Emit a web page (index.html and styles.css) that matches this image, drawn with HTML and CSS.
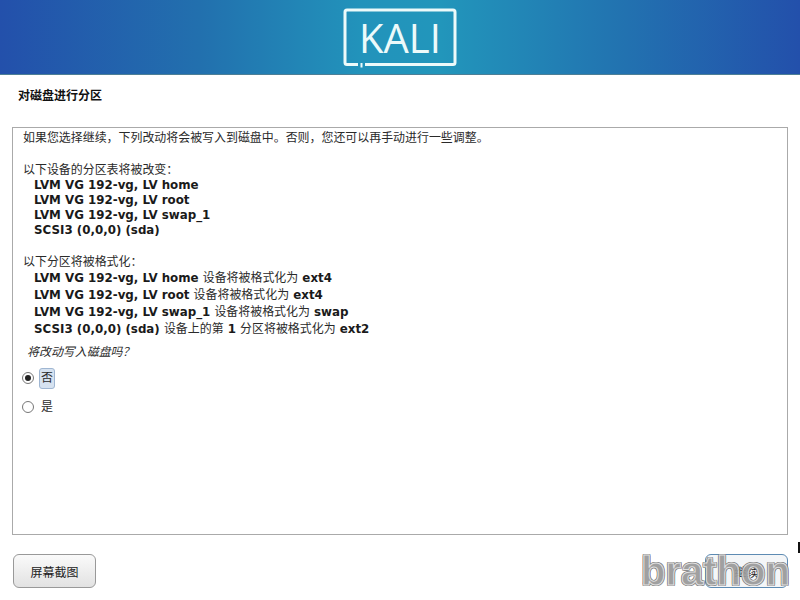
FILE: index.html
```html
<!DOCTYPE html>
<html lang="zh">
<head>
  <meta charset="utf-8">
  <title>对磁盘进行分区</title>
  <link rel="stylesheet" href="styles.css">
</head>
<body>
  <div class="banner">
    <svg class="logo" width="114" height="60" viewBox="0 0 114 60">
      <path d="M22 56.500H110a2 2 0 0 0 2-2V4a2 2 0 0 0-2-2H4a2 2 0 0 0-2 2V54.500a2 2 0 0 0 2 2H15" fill="none" stroke="#ecfafa" stroke-width="3"/>
      <path d="M18.500 55v4.500" stroke="#ecfafa" stroke-width="2"/>
    </svg>
    <span class="logo-text">KALI</span>
  </div>

  <h1 class="title">对磁盘进行分区</h1>

  <div class="panel">
    <p class="line">如果您选择继续，下列改动将会被写入到磁盘中。否则，您还可以再手动进行一些调整。</p>
    <p class="line gap-top">以下设备的分区表将被改变：</p>
    <p class="item">LVM VG 192-vg, LV home</p>
    <p class="item">LVM VG 192-vg, LV root</p>
    <p class="item">LVM VG 192-vg, LV swap_1</p>
    <p class="item">SCSI3 (0,0,0) (sda)</p>
    <p class="line gap-top">以下分区将被格式化：</p>
    <p class="item tall">LVM VG 192-vg, LV home <span class="cn">设备将被格式化为</span> ext4</p>
    <p class="item tall">LVM VG 192-vg, LV root <span class="cn">设备将被格式化为</span> ext4</p>
    <p class="item tall">LVM VG 192-vg, LV swap_1 <span class="cn">设备将被格式化为</span> swap</p>
    <p class="item tall">SCSI3 (0,0,0) (sda) <span class="cn">设备上的第</span> 1 <span class="cn">分区将被格式化为</span> ext2</p>
    <p class="question">将改动写入磁盘吗？</p>
    <div class="option">
      <span class="radio checked"></span>
      <span class="option-label selected">否</span>
    </div>
    <div class="option">
      <span class="radio"></span>
      <span class="option-label">是</span>
    </div>
  </div>

  <div class="buttons">
    <button class="btn">屏幕截图</button>
    <button class="btn btn-main">继续</button>
  </div>

  <div class="cursor-mark"></div>
  <div class="watermark">brathon</div>
</body>
</html>
```

FILE: styles.css
```css
* {
  box-sizing: border-box;
}

html, body {
  height: 100%;
}

body {
  margin: 0;
  width: 800px;
  height: 600px;
  overflow: hidden;
  position: relative;
  background-color: #fff;
  font-family: "DejaVu Sans", "Noto Sans CJK TC", sans-serif;
  font-size: 11.950px;
  color: #2a2a2a;
}

.banner {
  height: 75px;
  position: relative;
  background: linear-gradient(90deg, #2350ab 0%, #2270ae 25%, #2293bb 45%, #2296bb 55%, #2272b0 78%, #2350ab 100%);
  border-bottom: 1px solid #4d7f96;
}

.logo {
  position: absolute;
  left: 343px;
  top: 8px;
}

.logo-text {
  position: absolute;
  left: 359px;
  top: 10px;
  font-family: "Open Sans", "Liberation Sans", sans-serif;
  font-size: 40px;
  font-weight: 500;
  line-height: 56px;
  color: #ecfafa;
}

.title {
  margin: 0;
  padding: 13px 0 0 18px;
  height: 52px;
  font-size: 12px;
  line-height: 16px;
  font-weight: 700;
  color: #111;
}

.panel {
  height: 408px;
  margin: 0 12px;
  padding: 3px 10px;
  border: 1px solid #aaa;
}

.line, .item {
  margin: 0;
  line-height: 15px;
  white-space: nowrap;
}

.gap-top {
  margin-top: 17px;
}

.item {
  padding-left: 11px;
  font-size: 11.850px;
  font-weight: 700;
  color: #1a1a1a;
}

.item.tall {
  line-height: 17px;
}

.cn {
  font-size: 11.950px;
  font-weight: 400;
  color: #2a2a2a;
}

.question {
  margin: 7px 0 0 4px;
  line-height: 15px;
  font-style: italic;
}

.option {
  display: flex;
  align-items: center;
  gap: 5px;
  height: 22px;
  margin-top: 7px;
  margin-left: -1px;
}

.option + .option {
  margin-top: 7px;
}

.radio {
  width: 12px;
  height: 12px;
  border: 1px solid #777;
  border-radius: 50%;
  background-color: #fff;
  display: flex;
  align-items: center;
  justify-content: center;
}

.radio.checked::before {
  content: "";
  width: 6px;
  height: 6px;
  border-radius: 50%;
  background-color: #222;
}

.option-label {
  padding: 0 1px;
  height: 21px;
  line-height: 19px;
  border: 1px solid transparent;
}

.option-label.selected {
  background-color: #d6e2f0;
  border-color: #9fb6d2;
  border-radius: 3px;
}

.buttons {
  display: flex;
  justify-content: space-between;
  margin: 19px 12px 0 13px;
}

.btn {
  width: 83px;
  height: 34px;
  padding: 0;
  font-family: inherit;
  font-size: 12px;
  color: #222;
  background: linear-gradient(#fafafa, #e2e2e2);
  border: 1px solid #999;
  border-radius: 6px;
}

.btn-main {
  border-color: #5d8bb3;
  background: #f4f6f8;
}

.cursor-mark {
  position: absolute;
  left: 798px;
  top: 542px;
  width: 2px;
  height: 11px;
  background-color: #111;
}

.watermark {
  position: absolute;
  left: 641px;
  top: 548px;
  font-family: "Liberation Sans", sans-serif;
  font-size: 40px;
  font-weight: 700;
  line-height: 46px;
  color: #999;
  opacity: 0.92;
  -webkit-text-stroke: 1px #dedede;
  text-shadow: 1px 0 #7a7a7a, -1px 0 #7a7a7a, 0 1px #7a7a7a, 0 -1px #7a7a7a, 1px 1px #7a7a7a, -1px -1px #7a7a7a, 1px -1px #7a7a7a, -1px 1px #7a7a7a;
}
```
